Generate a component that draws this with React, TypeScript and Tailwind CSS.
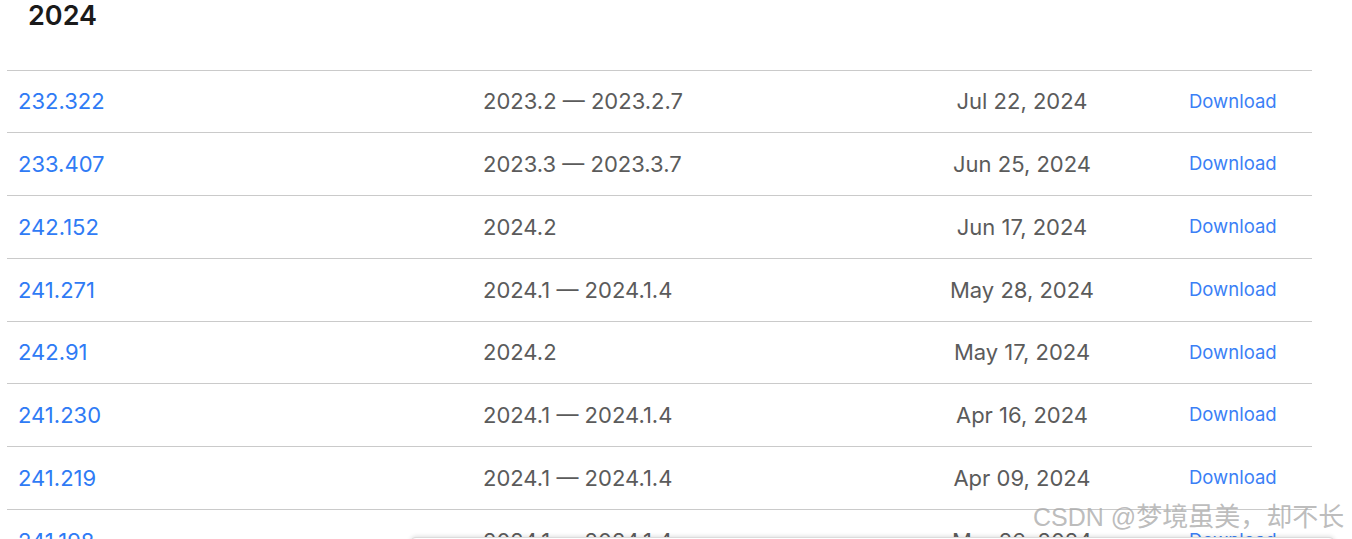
import React from "react";

const rows = [
  { v: "232.322", r: "2023.2 — 2023.2.7", d: "Jul 22, 2024", h: "h-[62px]" },
  { v: "233.407", r: "2023.3 — 2023.3.7", d: "Jun 25, 2024", h: "h-[63px]" },
  { v: "242.152", r: "2024.2", d: "Jun 17, 2024", h: "h-[63px]" },
  { v: "241.271", r: "2024.1 — 2024.1.4", d: "May 28, 2024", h: "h-[63px]" },
  { v: "242.91", r: "2024.2", d: "May 17, 2024", h: "h-[62px]" },
  { v: "241.230", r: "2024.1 — 2024.1.4", d: "Apr 16, 2024", h: "h-[63px]" },
  { v: "241.219", r: "2024.1 — 2024.1.4", d: "Apr 09, 2024", h: "h-[63px]" },
  { v: "241.198", r: "2024.1 — 2024.1.4", d: "Mar 26, 2024", h: "h-[63px]" },
];

export default function App() {
  return (
    <div
      className="relative h-[539px] w-[1352px] overflow-hidden bg-white"
      style={{ fontFamily: "Inter, 'Noto Sans', sans-serif" }}
    >
      <div className="h-[70px] pl-[28px] text-[27px] font-semibold leading-[32px] text-[#1a1a1a]">
        2024
      </div>
      <div className="ml-[7px] w-[1305px]">
        {rows.map((row) => (
          <div
            key={row.v}
            className={`grid ${row.h} grid-cols-[476px_439px_200px_1fr] items-center border-t border-[#cacaca]`}
          >
            <a className="pl-[11px] text-[22px] text-[#2f7bf5]">{row.v}</a>
            <div className="text-[22px] text-[#5b5b5b]">{row.r}</div>
            <div className="text-center text-[22px] text-[#5b5b5b]">{row.d}</div>
            <a className="pl-[67px] text-[18.5px] text-[#3b7ff6]">Download</a>
          </div>
        ))}
      </div>
      <div className="absolute left-[1033px] top-[498px] flex items-baseline whitespace-nowrap leading-[34px] text-[#ababab]/80">
        <span
          className="text-[25px]"
          style={{ fontFamily: "'Liberation Sans', sans-serif" }}
        >
          CSDN @
        </span>
        <span
          className="text-[26px]"
          style={{ fontFamily: "'Noto Sans CJK SC', sans-serif" }}
        >
          梦境虽美，却不长
        </span>
      </div>
      <div className="absolute left-[410px] top-[537px] h-[40px] w-[925px] rounded-t-[6px] border border-[#dcdcdc] bg-white shadow-[0_-1px_4px_rgba(0,0,0,0.12)]" />
    </div>
  );
}
